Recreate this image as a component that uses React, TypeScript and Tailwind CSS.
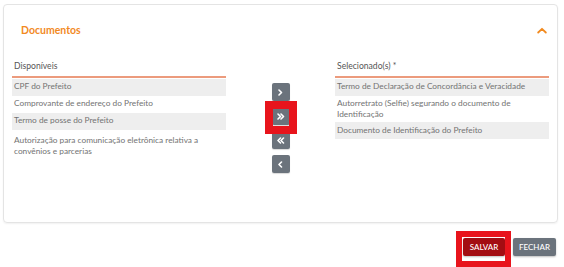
import React from "react";

type Item = { t: string; g?: boolean; extra?: boolean };

const left: Item[] = [
  { t: "CPF do Prefeito", g: true },
  { t: "Comprovante de endereço do Prefeito" },
  { t: "Termo de posse do Prefeito", g: true },
  { t: "Autorização para comunicação eletrônica relativa a convênios e parcerias", extra: true },
];

const right: Item[] = [
  { t: "Termo de Declaração de Concordância e Veracidade", g: true },
  { t: "Autorretrato (Selfie) segurando o documento de Identificação" },
  { t: "Documento de Identificação do Prefeito", g: true },
];

function List({ title, items }: { title: string; items: Item[] }) {
  return (
    <div className="w-[214px] flex flex-col">
      <div className="h-[21px] pl-[2px] pt-[1px] flex items-center text-[8.6px] text-[#555]">{title}</div>
      <div className="h-[1.5px] bg-[#ec9b7d]" />
      <div className="flex flex-col pt-[1px]">
        {items.map((it) => (
          <div
            key={it.t}
            className={`min-h-[17px] flex items-center px-[2px] py-[2px] leading-[11.3px] text-[8.3px] text-[#737373] ${it.g ? "bg-[#eeeeee]" : ""} ${it.extra ? "mt-[3px]" : ""}`}
          >
            {it.t}
          </div>
        ))}
      </div>
    </div>
  );
}

function Chev({ dir, dbl }: { dir: "r" | "l"; dbl?: boolean }) {
  const one = dir === "r" ? "M1 1 L3.5 3.5 L1 6" : "M3.5 1 L1 3.5 L3.5 6";
  return (
    <svg width={dbl ? 8 : 5} height="7" viewBox={dbl ? "0 0 8 7" : "0 0 5 7"} fill="none">
      <path d={one} stroke="white" strokeWidth="1.6" strokeLinecap="round" strokeLinejoin="round" />
      {dbl && (
        <path
          d={dir === "r" ? "M4 1 L6.5 3.5 L4 6" : "M6.5 1 L4 3.5 L6.5 6"}
          stroke="white"
          strokeWidth="1.6"
          strokeLinecap="round"
          strokeLinejoin="round"
        />
      )}
    </svg>
  );
}

function ArrowBtn({ children }: { children: React.ReactNode }) {
  return (
    <div className="w-[18px] h-[18px] rounded-[2px] bg-[#6b737c] flex items-center justify-center shadow-[0_1px_1px_rgba(0,0,0,0.15)]">
      {children}
    </div>
  );
}

export default function App() {
  return (
    <div className="w-[564px] h-[267px] bg-white overflow-hidden font-['Lato',sans-serif]">
      <div className="ml-[3px] mt-[4px] w-[555px] h-[219px] border border-[#e4e4e4] rounded-[4px] shadow-[0_1px_2px_rgba(0,0,0,0.06)]">
        <div className="flex items-center justify-between pl-[17px] pr-[10px] pt-[15px] h-[36px]">
          <span className="text-[10.5px] font-bold text-[#f28a1f]">Documentos</span>
          <svg width="10" height="7" viewBox="0 0 10 7" fill="none">
            <path d="M1.2 5.5 L5 1.8 L8.8 5.5" stroke="#f28a1f" strokeWidth="1.8" strokeLinecap="round" strokeLinejoin="round" />
          </svg>
        </div>
        <div className="flex px-[8px] pt-[14px]">
          <List title="Disponíveis" items={left} />
          <div className="flex-1 flex flex-col items-center gap-[6px] pt-[28px]">
            <ArrowBtn>
              <Chev dir="r" />
            </ArrowBtn>
            <div className="relative">
              <ArrowBtn>
                <Chev dir="r" dbl />
              </ArrowBtn>
              <div className="absolute left-[-7px] top-[-6px] w-[32px] h-[33px] border-[8px] border-[#e8141c]" />
            </div>
            <ArrowBtn>
              <Chev dir="l" dbl />
            </ArrowBtn>
            <ArrowBtn>
              <Chev dir="l" />
            </ArrowBtn>
          </div>
          <List title="Selecionado(s) *" items={right} />
        </div>
      </div>
      <div className="flex justify-end gap-[8px] pr-[8px] pt-[15px]">
        <div className="relative">
          <div className="w-[42px] h-[18px] rounded-[2px] bg-[#a30d12] text-white text-[8px] font-medium flex items-center justify-center shadow-[0_1px_2px_rgba(0,0,0,0.25)]">
            SALVAR
          </div>
          <div className="absolute left-[-7px] top-[-7px] w-[55px] h-[36px] border-[6px] border-[#e8141c]" />
        </div>
        <div className="w-[43px] h-[18px] rounded-[2px] bg-[#6b737c] text-white text-[8px] font-medium flex items-center justify-center shadow-[0_1px_2px_rgba(0,0,0,0.25)]">
          FECHAR
        </div>
      </div>
    </div>
  );
}
